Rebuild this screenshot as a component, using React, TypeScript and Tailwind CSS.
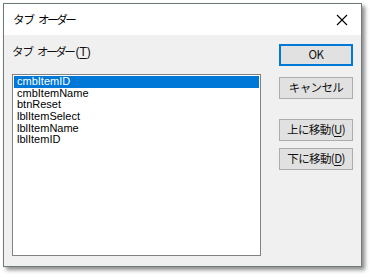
import React from "react";

const jp = { fontFamily: '"Noto Sans CJK JP", "Noto Sans", sans-serif' };
const lat = { fontFamily: '"Liberation Sans", "Noto Sans CJK JP", sans-serif' };

function Btn({ children, primary, mt }: { children: React.ReactNode; primary?: boolean; mt: string }) {
  return (
    <div
      className={`${mt} w-[74px] h-[22px] flex items-center justify-center bg-[#e1e1e1] text-[11.5px] tracking-[-0.6px] leading-none text-[#111] ${
        primary ? "border-2 border-[#0078d7]" : "border border-[#adadad]"
      }`}
      style={jp}
    >
      {children}
    </div>
  );
}

function TabOrder() {
  return (
    <>
      <span className="tracking-[-1px]">タブ</span>
      <span className="ml-[4px] tracking-[-2.4px]">オーダー</span>
    </>
  );
}

export default function App() {
  const items = ["cmbItemID", "cmbItemName", "btnReset", "lblItemSelect", "lblItemName", "lblItemID"];
  return (
    <div className="w-[371px] h-[277px] bg-white pt-[3px] pl-[3px]">
      <div className="w-[359px] h-[264px] border border-[#6f7a7a] bg-[#f0f0f0] flex flex-col shadow-[3px_3px_4px_rgba(0,0,0,0.45)]">
        <div className="h-[31px] bg-white flex items-center justify-between pl-[9px] pr-[13px]">
          <span className="flex items-center text-[11.5px] leading-none text-black" style={jp}>
            <TabOrder />
          </span>
          <svg width="12" height="12" viewBox="0 0 12 12">
            <path d="M1 1 L11 11 M11 1 L1 11" stroke="#000" strokeWidth="1.1" fill="none" />
          </svg>
        </div>
        <div className="flex flex-1">
          <div className="flex flex-col pl-[8px]">
            <div className="mt-[9px] h-[16px] flex items-center text-[11.5px] leading-none text-[#111]" style={jp}>
              <TabOrder />
              <span className="ml-[2px] text-[12px]" style={lat}>
                (<span className="underline underline-offset-2">T</span>)
              </span>
            </div>
            <div className="mt-[14px] w-[249px] h-[182px] border border-[#828282] bg-white p-[1px]">
              {items.map((it, i) => (
                <div
                  key={it}
                  className={`h-[11.6px] flex items-center pl-[3px] text-[11px] leading-none ${
                    i === 0 ? "bg-[#0078d7] text-white" : "text-black"
                  }`}
                  style={lat}
                >
                  {it}
                </div>
              ))}
            </div>
          </div>
          <div className="flex flex-col ml-[18px]">
            <Btn primary mt="mt-[9px]">OK</Btn>
            <Btn mt="mt-[11px]">キャンセル</Btn>
            <Btn mt="mt-[20px]">
              上に移動(<span className="underline underline-offset-2">U</span>)
            </Btn>
            <Btn mt="mt-[7px]">
              下に移動(<span className="underline underline-offset-2">D</span>)
            </Btn>
          </div>
        </div>
      </div>
    </div>
  );
}
